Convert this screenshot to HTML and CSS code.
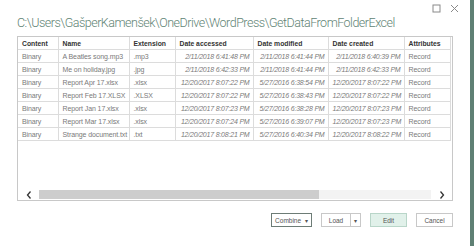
FILE: index.html
```html
<!DOCTYPE html>
<html lang="en">
<head>
    <meta charset="UTF-8">
    <title>GetDataFromFolderExcel</title>
    <link rel="stylesheet" href="styles.css">
</head>
<body>
    <div class="dialog">
        <div class="titlebar">
            <svg class="ctl" width="9" height="9" viewBox="0 0 9 9"><rect x="1" y="1" width="7" height="7" fill="none" stroke="#8a8a8a" stroke-width="1"/></svg>
            <svg class="ctl" width="9" height="9" viewBox="0 0 9 9"><path d="M1 1 L8 8 M8 1 L1 8" stroke="#8a8a8a" stroke-width="1"/></svg>
        </div>
        <h1 class="path">C:\Users\GašperKamenšek\OneDrive\WordPress\GetDataFromFolderExcel</h1>

        <div class="grid">
            <table>
                <colgroup>
                    <col style="width:40px"><col style="width:71px"><col style="width:46px"><col style="width:78px"><col style="width:75px"><col style="width:76px"><col style="width:46px">
                </colgroup>
                <thead>
                    <tr><th>Content</th><th>Name</th><th>Extension</th><th>Date accessed</th><th>Date modified</th><th>Date created</th><th>Attributes</th></tr>
                </thead>
                <tbody>
                    <tr><td>Binary</td><td>A Beatles song.mp3</td><td>.mp3</td><td class="date">2/11/2018 6:41:48 PM</td><td class="date">2/11/2018 6:41:44 PM</td><td class="date">2/11/2018 6:40:39 PM</td><td>Record</td></tr>
                    <tr><td>Binary</td><td>Me on holiday.jpg</td><td>.jpg</td><td class="date">2/11/2018 6:42:33 PM</td><td class="date">2/11/2018 6:41:44 PM</td><td class="date">2/11/2018 6:42:33 PM</td><td>Record</td></tr>
                    <tr><td>Binary</td><td>Report Apr 17.xlsx</td><td>.xlsx</td><td class="date">12/20/2017 8:07:22 PM</td><td class="date">5/27/2016 6:38:54 PM</td><td class="date">12/20/2017 8:07:22 PM</td><td>Record</td></tr>
                    <tr><td>Binary</td><td>Report Feb 17.XLSX</td><td>.XLSX</td><td class="date">12/20/2017 8:07:22 PM</td><td class="date">5/27/2016 6:38:43 PM</td><td class="date">12/20/2017 8:07:22 PM</td><td>Record</td></tr>
                    <tr><td>Binary</td><td>Report Jan 17.xlsx</td><td>.xlsx</td><td class="date">12/20/2017 8:07:23 PM</td><td class="date">5/27/2016 6:38:28 PM</td><td class="date">12/20/2017 8:07:23 PM</td><td>Record</td></tr>
                    <tr><td>Binary</td><td>Report Mar 17.xlsx</td><td>.xlsx</td><td class="date">12/20/2017 8:07:24 PM</td><td class="date">5/27/2016 6:39:07 PM</td><td class="date">12/20/2017 8:07:23 PM</td><td>Record</td></tr>
                    <tr><td>Binary</td><td>Strange document.txt</td><td>.txt</td><td class="date">12/20/2017 8:08:21 PM</td><td class="date">5/27/2016 6:40:34 PM</td><td class="date">12/20/2017 8:08:22 PM</td><td>Record</td></tr>
                </tbody>
            </table>
            <div class="hscroll">
                <span class="arrow">
                    <svg width="6" height="8" viewBox="0 0 6 8"><polyline points="4.5,0.5 1.5,4 4.5,7.5" fill="none" stroke="#333" stroke-width="1.3"/></svg>
                </span>
                <div class="track"><div class="thumb"></div></div>
                <span class="arrow">
                    <svg width="6" height="8" viewBox="0 0 6 8"><polyline points="1.5,0.5 4.5,4 1.5,7.5" fill="none" stroke="#333" stroke-width="1.3"/></svg>
                </span>
            </div>
        </div>

        <div class="actions">
            <button class="btn focus">Combine <span class="caret">&#9662;</span></button>
            <div class="split">
                <button class="btn load">Load</button>
                <button class="btn drop"><span class="caret">&#9662;</span></button>
            </div>
            <button class="btn primary">Edit</button>
            <button class="btn">Cancel</button>
        </div>
    </div>
</body>
</html>
```

FILE: styles.css
```css
body {
    margin: 0;
    background: #ffffff;
    font-family: 'Liberation Sans', Arial, sans-serif;
}

.dialog {
    width: 470px;
    height: 246px;
    border-right: 4px solid #5f8074;
    display: flex;
    flex-direction: column;
}

.titlebar {
    display: flex;
    justify-content: flex-end;
    gap: 9px;
    height: 9px;
    padding: 4px 11px 0 0;
}

.ctl {
    display: block;
}

.path {
    margin: 0 0 0 17px;
    font-family: 'Roboto', 'Open Sans', sans-serif;
    font-weight: 300;
    font-size: 12.5px;
    letter-spacing: -0.5px;
    line-height: 20px;
    color: #5f8475;
    white-space: nowrap;
}

.grid {
    margin: 3px 17px 0 17px;
    height: 163px;
    border: 1px solid #c8c8c8;
    display: flex;
    flex-direction: column;
    justify-content: space-between;
}

table {
    border-collapse: collapse;
    table-layout: fixed;
    width: 432px;
    font-size: 7px;
}

th, td {
    height: 12px;
    padding: 0 3px 0 4px;
    border-right: 1px solid #dcdcdc;
    border-bottom: 1px solid #dcdcdc;
    white-space: nowrap;
    overflow: hidden;
    text-align: left;
}

th {
    color: #333;
    font-weight: bold;
    font-size: 6.8px;
}

td {
    color: #7a7a7a;
    letter-spacing: -0.1px;
    -webkit-font-smoothing: antialiased;
}

td.date {
    text-align: right;
    font-style: italic;
    letter-spacing: -0.2px;
}

.hscroll {
    display: flex;
    align-items: center;
    height: 9px;
    margin-bottom: 1px;
}

.arrow {
    width: 21px;
    display: flex;
    justify-content: center;
}

.track {
    flex: 1;
    height: 9px;
    background: #f3f3f3;
}

.thumb {
    width: 280px;
    height: 9px;
    background: #cdcdcd;
}

.actions {
    display: flex;
    justify-content: flex-end;
    gap: 9px;
    margin: 12px 17px 0 0;
}

.btn {
    height: 14px;
    padding: 0;
    border: 1px solid #c8c8c8;
    background: #ffffff;
    color: #555;
    font-family: 'Liberation Sans', Arial, sans-serif;
    font-size: 6.5px;
    width: 37px;
}

.btn.focus {
    width: 41px;
    border-color: #6d7c76;
}

.caret {
    font-size: 6px;
    margin-left: 2px;
}

.split {
    display: flex;
}

.btn.load {
    width: 30px;
}

.btn.drop {
    width: 10px;
    border-left: none;
}

.btn.drop .caret {
    margin: 0;
}

.btn.primary {
    background: #e1f1ea;
    border-color: #b9d6c9;
}
```
